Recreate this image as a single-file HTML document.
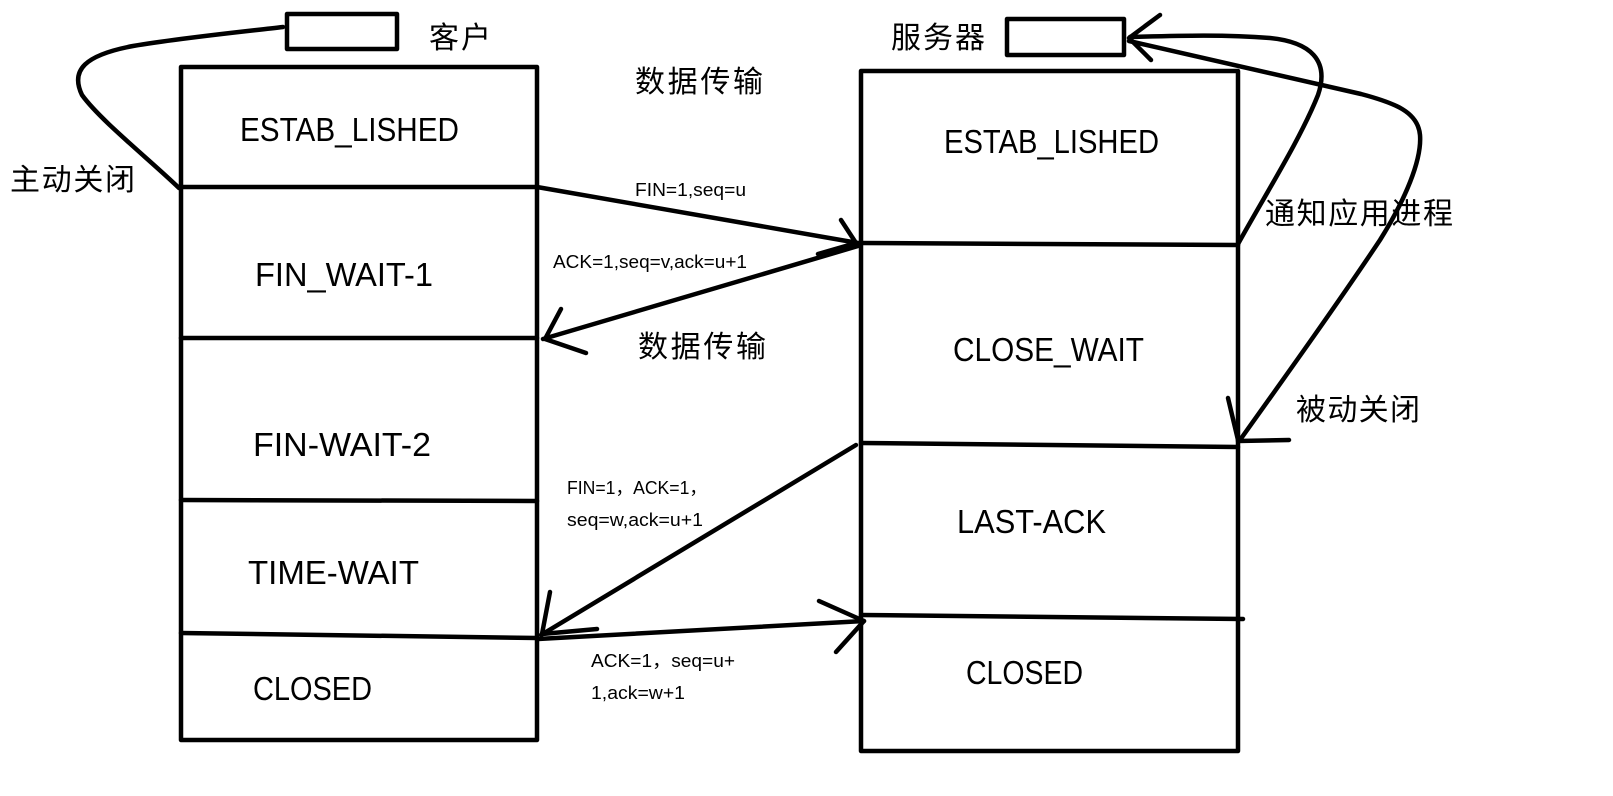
<!DOCTYPE html>
<html><head><meta charset="utf-8"><style>
html,body{margin:0;padding:0;background:#fff;width:1613px;height:796px;overflow:hidden}
svg{display:block}
text{font-family:"Liberation Sans","Noto Sans CJK SC",sans-serif;fill:#000}
.big{font-size:33px}
.cn{font-size:30px}
.sm{font-size:18px}
</style></head><body>
<svg width="1613" height="796" viewBox="0 0 1613 796" xmlns="http://www.w3.org/2000/svg">
<g fill="none" stroke="#000" stroke-width="4.5" stroke-linecap="round" stroke-linejoin="round">
<rect x="181" y="67" width="356" height="673"/>
<line x1="181" y1="187" x2="537" y2="187"/>
<line x1="181" y1="338" x2="537" y2="338"/>
<line x1="181" y1="500" x2="537" y2="501"/>
<line x1="181" y1="633" x2="537" y2="638"/>
<rect x="287" y="14" width="110" height="35"/>
<rect x="861" y="71" width="377" height="680"/>
<line x1="861" y1="243" x2="1238" y2="245"/>
<line x1="861" y1="443" x2="1238" y2="447"/>
<line x1="861" y1="615" x2="1243" y2="619"/>
<rect x="1007" y="19" width="117" height="36"/>
<path d="M179,188 C150,160 100,120 82,95 C70,70 85,55 133,46 C180,38 240,32 283,27"/>
<line x1="537" y1="187" x2="858" y2="243"/>
<polyline points="841,220 856,243 818,254"/>
<line x1="858" y1="246" x2="543" y2="339"/>
<polyline points="561,309 545,339 586,353"/>
<line x1="856" y1="445" x2="541" y2="635"/>
<polyline points="550,592 542,634 597,629"/>
<line x1="538" y1="639" x2="864" y2="621"/>
<polyline points="819,601 864,621 836,652"/>
<path d="M1238,244 C1265,195 1300,140 1318,95 C1330,60 1310,42 1270,38 C1220,34 1170,36 1130,37"/>
<path d="M1129,41 L1361,94 C1395,103 1418,112 1420,135 C1422,160 1405,200 1380,240 C1340,300 1290,370 1240,440"/>
<polyline points="1160,15 1129,38 1151,60"/>
<line x1="1228" y1="398" x2="1238" y2="440"/>
<line x1="1238" y1="441" x2="1289" y2="440"/>
</g>
<text class="cn" x="429" y="48" textLength="62">客户</text>
<text class="cn" x="891" y="48" textLength="94">服务器</text>
<text class="cn" x="635" y="92" textLength="128">数据传输</text>
<text class="cn" x="638" y="357" textLength="128">数据传输</text>
<text class="cn" x="10" y="190" textLength="125">主动关闭</text>
<text class="cn" x="1265" y="224" textLength="188">通知应用进程</text>
<text class="cn" x="1296" y="420" textLength="124">被动关闭</text>

<text class="big" x="240" y="141" textLength="219" lengthAdjust="spacingAndGlyphs">ESTAB_LISHED</text>
<text class="big" x="255" y="286" textLength="178" lengthAdjust="spacingAndGlyphs">FIN_WAIT-1</text>
<text class="big" x="253" y="456" textLength="178" lengthAdjust="spacingAndGlyphs">FIN-WAIT-2</text>
<text class="big" x="248" y="584" textLength="171" lengthAdjust="spacingAndGlyphs">TIME-WAIT</text>
<text class="big" x="253" y="700" textLength="119" lengthAdjust="spacingAndGlyphs">CLOSED</text>

<text class="big" x="944" y="153" textLength="215" lengthAdjust="spacingAndGlyphs">ESTAB_LISHED</text>
<text class="big" x="953" y="361" textLength="191" lengthAdjust="spacingAndGlyphs">CLOSE_WAIT</text>
<text class="big" x="957" y="533" textLength="149" lengthAdjust="spacingAndGlyphs">LAST-ACK</text>
<text class="big" x="966" y="684" textLength="117" lengthAdjust="spacingAndGlyphs">CLOSED</text>

<text class="sm" x="635" y="196" textLength="111" lengthAdjust="spacingAndGlyphs">FIN=1,seq=u</text>
<text class="sm" x="553" y="268" textLength="194" lengthAdjust="spacingAndGlyphs">ACK=1,seq=v,ack=u+1</text>
<text class="sm" x="567" y="494" textLength="140" lengthAdjust="spacingAndGlyphs">FIN=1，ACK=1，</text>
<text class="sm" x="567" y="526" textLength="136" lengthAdjust="spacingAndGlyphs">seq=w,ack=u+1</text>
<text class="sm" x="591" y="667" textLength="144" lengthAdjust="spacingAndGlyphs">ACK=1，seq=u+</text>
<text class="sm" x="591" y="699" textLength="94" lengthAdjust="spacingAndGlyphs">1,ack=w+1</text>
</svg>
</body></html>
